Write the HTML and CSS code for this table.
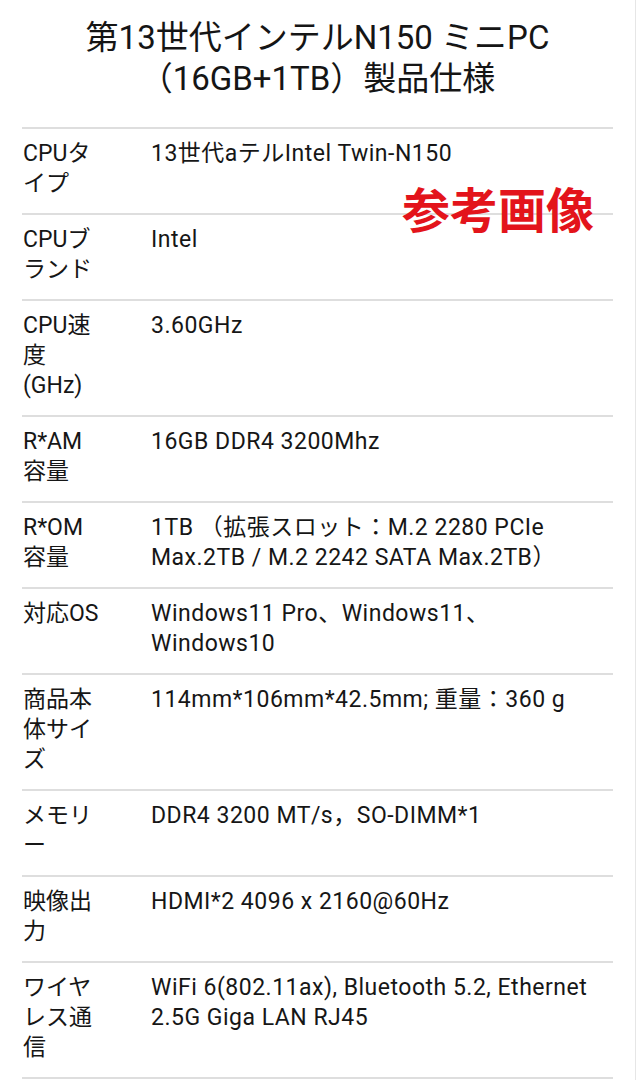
FILE: index.html
```html
<!DOCTYPE html>
<html lang="ja">
<head>
<meta charset="utf-8">
<title>製品仕様</title>
<link rel="stylesheet" href="styles.css">
</head>
<body>
<div class="page">
  <h1 class="title">第13世代インテルN150 ミニPC<br>（16GB+1TB）製品仕様</h1>
  <div class="specs">
    <div class="row"><div class="label">CPUタ<br>イプ</div><div class="value">13世代aテルIntel Twin-N150</div></div>
    <div class="row"><div class="label">CPUブ<br>ランド</div><div class="value">Intel</div></div>
    <div class="row"><div class="label">CPU速<br>度<br>(GHz)</div><div class="value">3.60GHz</div></div>
    <div class="row"><div class="label">R*AM<br>容量</div><div class="value">16GB DDR4 3200Mhz</div></div>
    <div class="row"><div class="label">R*OM<br>容量</div><div class="value">1TB （拡張スロット：M.2 2280 PCIe<br>Max.2TB / M.2 2242 SATA Max.2TB）</div></div>
    <div class="row"><div class="label">対応OS</div><div class="value">Windows11 Pro、Windows11、<br>Windows10</div></div>
    <div class="row"><div class="label">商品本<br>体サイ<br>ズ</div><div class="value">114mm*106mm*42.5mm; 重量：360 g</div></div>
    <div class="row"><div class="label">メモリ<br>ー</div><div class="value">DDR4 3200 MT/s，SO-DIMM*1</div></div>
    <div class="row"><div class="label">映像出<br>力</div><div class="value">HDMI*2 4096 x 2160@60Hz</div></div>
    <div class="row"><div class="label">ワイヤ<br>レス通<br>信</div><div class="value">WiFi 6(802.11ax), Bluetooth 5.2, Ethernet<br>2.5G Giga LAN RJ45</div></div>
    <div class="stamp">参考画像</div>
  </div>
</div>
</body>
</html>
```
FILE: styles.css
```css
html, body {
  margin: 0;
  padding: 0;
  background: #ffffff;
}

body {
  font-family: Roboto, "Noto Sans CJK JP", sans-serif;
  color: #161616;
}

.page {
  width: 636px;
  min-height: 1080px;
  border-right: 1px solid #e6e6e6;
  box-sizing: border-box;
  padding: 17px 22px 0 22px;
}

.title {
  margin: 0 0 28px 0;
  font-size: 33px;
  line-height: 41px;
  font-weight: 400;
  text-align: center;
  color: #151515;
}

.specs {
  position: relative;
  border-top: 2px solid #dedede;
}

.row {
  display: grid;
  grid-template-columns: 128px 1fr;
  padding: 10px 0 14px 1px;
  border-bottom: 2px solid #dedede;
  font-size: 23px;
  line-height: 30px;
}

.label {
  white-space: nowrap;
}

.value {
  white-space: nowrap;
  letter-spacing: 0.5px;
}

.stamp {
  position: absolute;
  left: 380px;
  top: 52px;
  font-family: "Noto Sans CJK JP", sans-serif;
  font-size: 48px;
  line-height: 52px;
  font-weight: 700;
  color: #e3141b;
}
```
